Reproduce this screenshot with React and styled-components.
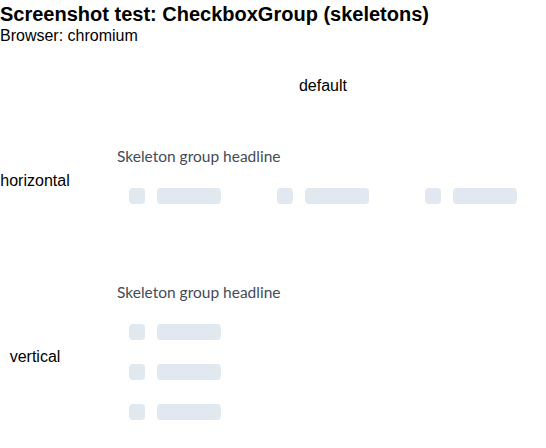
import React from 'react';
import styled, { createGlobalStyle } from 'styled-components';

const GlobalStyle = createGlobalStyle`
  body {
    margin: 0;
    font-family: "Liberation Sans", Arial, sans-serif;
    background: #fff;
    color: #000;
  }
`;

const Title = styled.h1`
  margin: 2px 0 0;
  font-size: 20px;
  line-height: 24px;
  font-weight: bold;
`;

const Subtitle = styled.div`
  font-size: 16px;
  line-height: 20px;
`;

const Row = styled.div`
  display: grid;
  grid-template-columns: 70px 1fr;
  column-gap: 30px;
  align-items: center;
  padding: ${(p) => p.$pad || '33px 0'};
`;

const ColumnHead = styled.div`
  grid-column: 2;
  text-align: center;
  font-size: 16px;
  line-height: 18px;
`;

const RowLabel = styled.div`
  font-size: 16px;
  line-height: 18px;
  text-align: center;
`;

const Cell = styled.div`
  padding-left: 17px;
`;

const Group = styled.div`
  font-family: Lato, "Noto Sans", sans-serif;
`;

const Headline = styled.div`
  font-size: 15.5px;
  line-height: 20px;
  color: #454b57;
  margin-bottom: 10px;
`;

const Items = styled.div`
  display: flex;
  flex-direction: ${(p) => (p.$vertical ? 'column' : 'row')};
  gap: ${(p) => (p.$vertical ? 0 : 32)}px;
`;

const Item = styled.div`
  display: flex;
  align-items: center;
  gap: 12px;
  padding: 12px;
`;

const Bone = styled.div`
  width: ${(p) => p.$w}px;
  height: 16px;
  border-radius: 4px;
  background: #e2e8f0;
`;

const SkeletonGroup = ({ vertical }) => (
  <Group>
    <Headline>Skeleton group headline</Headline>
    <Items $vertical={vertical}>
      {[0, 1, 2].map((i) => (
        <Item key={i}>
          <Bone $w={16} />
          <Bone $w={64} />
        </Item>
      ))}
    </Items>
  </Group>
);

export default function App() {
  return (
    <>
      <GlobalStyle />
      <Title>Screenshot test: CheckboxGroup (skeletons)</Title>
      <Subtitle>Browser: chromium</Subtitle>
      <Row $pad="31px 0 18px">
        <ColumnHead>default</ColumnHead>
      </Row>
      <Row>
        <RowLabel>horizontal</RowLabel>
        <Cell>
          <SkeletonGroup />
        </Cell>
      </Row>
      <Row>
        <RowLabel>vertical</RowLabel>
        <Cell>
          <SkeletonGroup vertical />
        </Cell>
      </Row>
    </>
  );
}
